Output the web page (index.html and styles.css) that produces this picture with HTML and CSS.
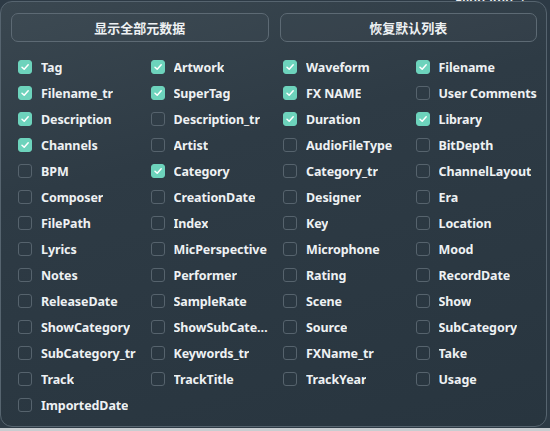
FILE: index.html
```html
<!DOCTYPE html>
<html lang="zh">
<head>
<meta charset="utf-8">
<title>Columns</title>
<link rel="stylesheet" href="styles.css">
</head>
<body>
<div class="behind">Filename ↓</div>
<div class="panel">
  <div class="actions">
    <button class="btn">显示全部元数据</button>
    <button class="btn">恢复默认列表</button>
  </div>
  <div class="grid" id="grid"></div>
</div>
<script src="app.js"></script>
</body>
</html>
```
FILE: styles.css
```css
html, body {
  margin: 0;
  padding: 0;
}
body {
  width: 550px;
  height: 431px;
  overflow: hidden;
  position: relative;
  background: linear-gradient(#2d3a45 0, #2d3a45 428px, #c9cdd1 428px);
  font-family: "Noto Sans", "Noto Sans CJK SC", sans-serif;
}
.behind {
  position: absolute;
  left: 455px;
  top: -10px;
  color: #eef1f3;
  font-size: 13px;
  font-weight: 600;
}
.panel {
  position: relative;
  margin-top: 1px;
  width: 547px;
  height: 426px;
  box-sizing: border-box;
  border: 1px solid #56646f;
  border-radius: 12px;
  background: linear-gradient(165deg, #3a4750 0%, #2e3b45 35%, #28353f 100%);
  padding: 11px 9px 0 10px;
}
.actions {
  display: flex;
  gap: 11px;
}
.btn {
  flex: 1;
  height: 29px;
  border: 1px solid #5d6a74;
  border-radius: 7px;
  background: rgba(255,255,255,0.02);
  color: #eef1f3;
  font-family: "Noto Sans CJK SC", sans-serif;
  font-size: 13px;
  font-weight: 700;
  padding: 0;
}
.grid {
  display: grid;
  grid-template-columns: repeat(4, 132.5px);
  grid-auto-rows: 26px;
  margin-top: 12px;
  padding-left: 7px;
}
.item {
  display: flex;
  align-items: center;
  gap: 9px;
  color: #eef1f3;
  font-size: 12.5px;
  font-weight: 700;
  letter-spacing: -0.1px;
  white-space: nowrap;
}
.box {
  flex: none;
  width: 14px;
  height: 14px;
  box-sizing: border-box;
  border: 1px solid #56636d;
  border-radius: 3px;
  display: flex;
  align-items: center;
  justify-content: center;
}
.box.on {
  background: #6dd3bc;
  border-color: #6dd3bc;
}
.box svg {
  width: 10px;
  height: 10px;
}
.label {
  max-width: 97px;
  overflow: hidden;
  text-overflow: ellipsis;
}
.item:nth-child(4n) .label {
  max-width: none;
}
```
FILE: app.js
```js
const items = [
  ["Tag",1],["Artwork",1],["Waveform",1],["Filename",1],
  ["Filename_tr",1],["SuperTag",1],["FX NAME",1],["User Comments",0],
  ["Description",1],["Description_tr",0],["Duration",1],["Library",1],
  ["Channels",1],["Artist",0],["AudioFileType",0],["BitDepth",0],
  ["BPM",0],["Category",1],["Category_tr",0],["ChannelLayout",0],
  ["Composer",0],["CreationDate",0],["Designer",0],["Era",0],
  ["FilePath",0],["Index",0],["Key",0],["Location",0],
  ["Lyrics",0],["MicPerspective",0],["Microphone",0],["Mood",0],
  ["Notes",0],["Performer",0],["Rating",0],["RecordDate",0],
  ["ReleaseDate",0],["SampleRate",0],["Scene",0],["Show",0],
  ["ShowCategory",0],["ShowSubCategory",0],["Source",0],["SubCategory",0],
  ["SubCategory_tr",0],["Keywords_tr",0],["FXName_tr",0],["Take",0],
  ["Track",0],["TrackTitle",0],["TrackYear",0],["Usage",0],
  ["ImportedDate",0]
];
const grid = document.getElementById("grid");
for (const [name, on] of items) {
  const el = document.createElement("label");
  el.className = "item";
  const box = document.createElement("span");
  box.className = "box" + (on ? " on" : "");
  if (on) box.innerHTML = '<svg viewBox="0 0 10 10"><path d="M2 5.2 L4.2 7.3 L8.2 2.8" fill="none" stroke="#fff" stroke-width="1.5" stroke-linecap="round" stroke-linejoin="round"/></svg>';
  const t = document.createElement("span");
  t.className = "label";
  t.textContent = name;
  el.append(box, t);
  grid.append(el);
}
```
